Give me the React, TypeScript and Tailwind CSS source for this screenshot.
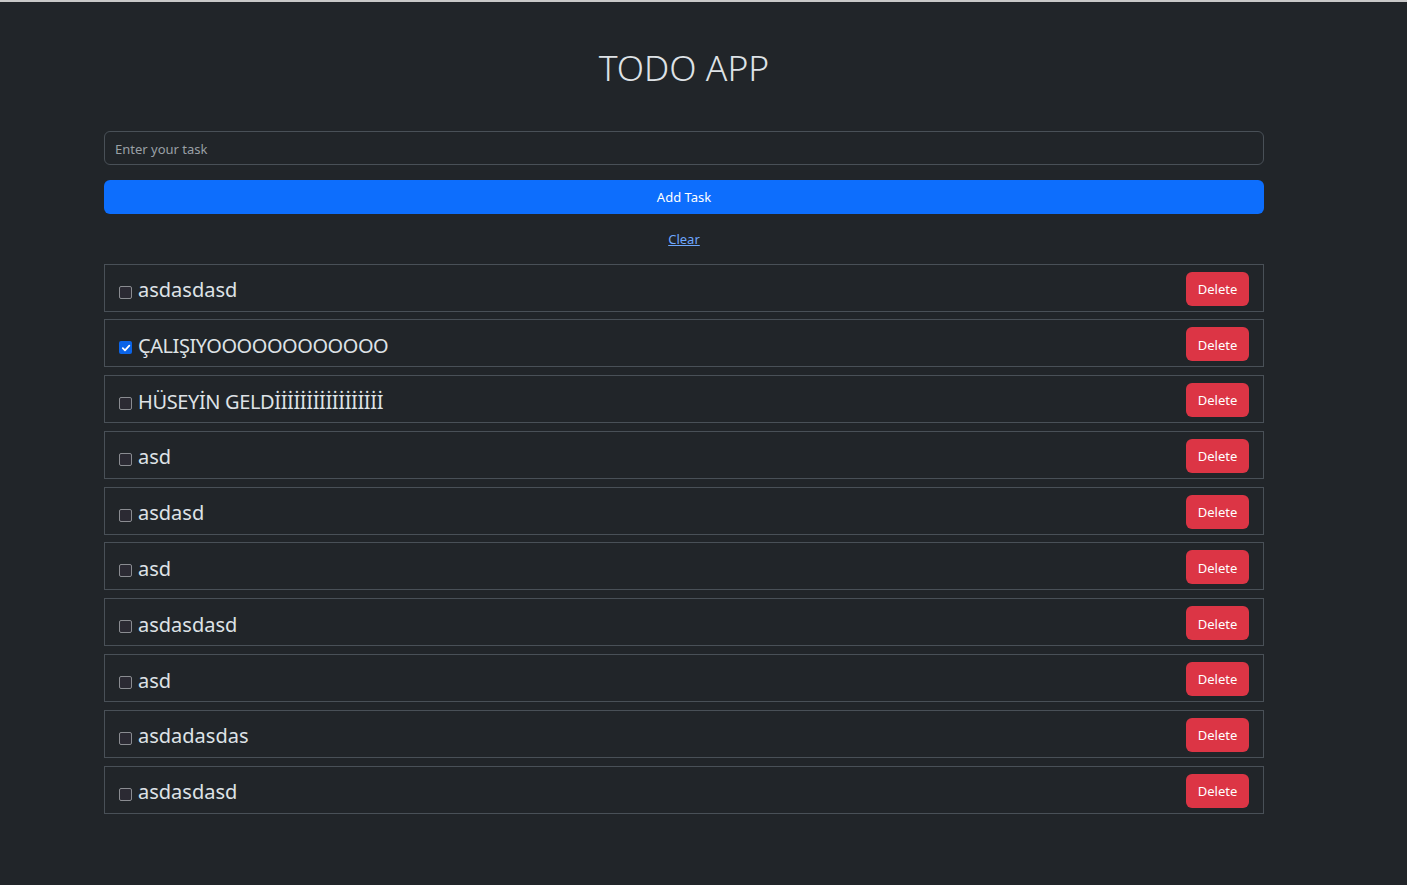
import React from "react";

const tasks = [
  { text: "asdasdasd", done: false, track: "" },
  { text: "ÇALIŞIYOOOOOOOOOOOO", done: true, track: "tracking-[-0.45px]" },
  { text: "HÜSEYİN GELDİİİİİİİİİİİİİİİİİ", done: false, track: "tracking-[-0.38px]" },
  { text: "asd", done: false, track: "" },
  { text: "asdasd", done: false, track: "" },
  { text: "asd", done: false, track: "" },
  { text: "asdasdasd", done: false, track: "" },
  { text: "asd", done: false, track: "" },
  { text: "asdadasdas", done: false, track: "" },
  { text: "asdasdasd", done: false, track: "" },
];

function Check({ checked }: { checked: boolean }) {
  return checked ? (
    <span className="flex h-[13px] w-[13px] shrink-0 translate-y-[2px] items-center justify-center rounded-[2px] bg-[#0b64e8]">
      <svg width="10" height="10" viewBox="0 0 10 10">
        <path d="M1.8 5.2 L4 7.3 L8.3 2.6" fill="none" stroke="white" strokeWidth="1.8" strokeLinecap="round" strokeLinejoin="round" />
      </svg>
    </span>
  ) : (
    <span className="block h-[13px] w-[13px] shrink-0 translate-y-[2px] rounded-[2px] border border-[#8a8c91] bg-[#2b2a33]" />
  );
}

export default function App() {
  return (
    <div
      className="min-h-[885px] w-full border-t-2 border-[#c8c8c8] bg-[#212529] text-[#dee2e6]"
      style={{ fontFamily: '"Noto Sans", "Open Sans", sans-serif' }}
    >
      <div className="ml-[104px] w-[1160px] pt-[41px]">
        <h1 className="text-center text-[35.5px] font-light leading-[48px] text-[#dee2e6]">TODO APP</h1>
        <div className="mt-[40px] flex h-[34px] items-center rounded-[6px] border border-[#495057] px-[10px] pt-[3px] text-[13px] text-[#9aa0a6]">
          Enter your task
        </div>
        <button className="mt-[15px] flex h-[34px] w-full items-center justify-center rounded-[6px] bg-[#0d6efd] pt-[2px] text-[13px] text-white">
          Add Task
        </button>
        <div className="mt-[16px] flex justify-center">
          <span className="text-[13px] text-[#6ea8fe] underline">Clear</span>
        </div>
        <div className="mt-[14px] flex flex-col gap-[7.8px]">
          {tasks.map((t, i) => (
            <div
              key={i}
              className="flex h-[48px] shrink-0 items-start justify-between border border-[#495057] pl-[14px] pr-[14px] pt-[7px]"
            >
              <div className="flex h-[34px] items-center gap-[6px] pt-[3px]">
                <Check checked={t.done} />
                <span className={`text-[20px] leading-[28px] text-[#dee2e6] ${t.track}`}>{t.text}</span>
              </div>
              <button className="flex h-[34px] w-[63px] items-center justify-center rounded-[6px] bg-[#dc3545] pt-[2px] text-[13px] text-white">
                Delete
              </button>
            </div>
          ))}
        </div>
      </div>
    </div>
  );
}
